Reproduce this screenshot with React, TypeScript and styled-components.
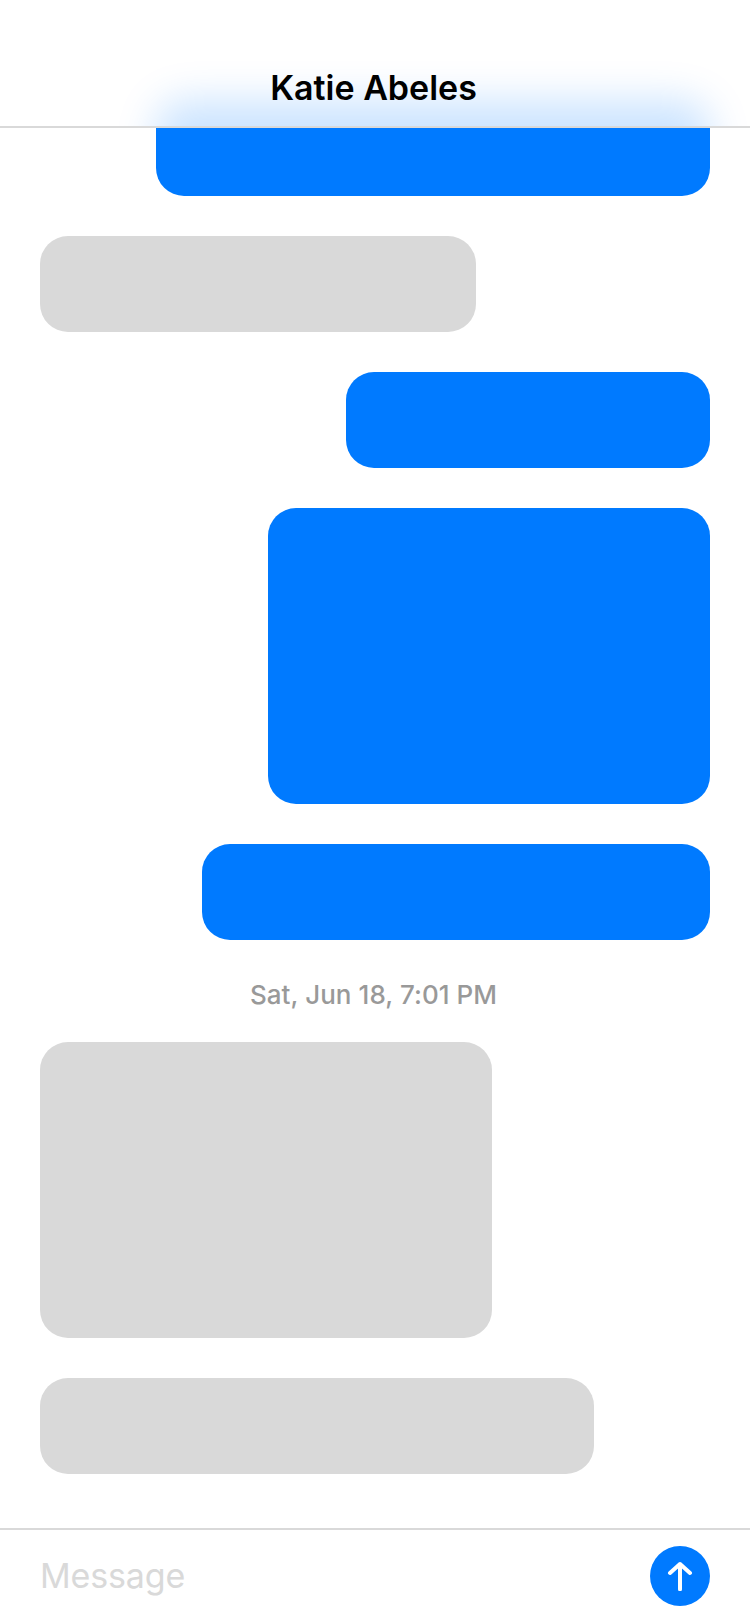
import React from 'react';
import styled, { createGlobalStyle } from 'styled-components';

const GlobalStyle = createGlobalStyle`
  * { box-sizing: border-box; }
  body { margin: 0; background: #fff; font-family: Inter, sans-serif; }
`;

const Screen = styled.div`
  position: relative;
  width: 750px;
  height: 1624px;
  overflow: hidden;
  display: flex;
  flex-direction: column;
  background: #fff;
`;

const Header = styled.header`
  position: absolute;
  top: 0;
  left: 0;
  z-index: 1;
  width: 100%;
  height: 128px;
  padding: 66px 3px 0 0;
  overflow: hidden;
  border-bottom: 2px solid #d9d9d9;
  background: #fff;
  text-align: center;
`;

/* Frosted tint of the bubble scrolling beneath the header */
const Frost = styled.div`
  position: absolute;
  top: 100px;
  right: 40px;
  width: 554px;
  height: 96px;
  border-radius: 28px;
  background: #007aff;
  opacity: 0.2;
  filter: blur(20px);
`;

const Name = styled.h1`
  position: relative;
  margin: 0;
  color: #000;
  font-size: 34px;
  font-weight: 600;
  line-height: 44px;
`;

const Thread = styled.main`
  flex: 1;
  display: flex;
  flex-direction: column;
  gap: 40px;
  padding: 100px 40px 0;
`;

const Bubble = styled.div<{ $sent?: boolean; $w: number; $h?: number }>`
  flex: none;
  align-self: ${(p) => (p.$sent ? 'flex-end' : 'flex-start')};
  width: ${(p) => p.$w}px;
  height: ${(p) => p.$h ?? 96}px;
  border-radius: 28px;
  background: ${(p) => (p.$sent ? '#007aff' : '#d9d9d9')};
`;

const Timestamp = styled.time`
  margin: 0 3px 0 0;
  height: 22px;
  color: #999;
  font-size: 26px;
  font-weight: 500;
  letter-spacing: 0.06px;
  line-height: 30px;
  text-align: center;
`;

const Composer = styled.footer`
  display: flex;
  align-items: center;
  justify-content: space-between;
  height: 96px;
  padding: 0 40px 2px;
  border-top: 2px solid #d9d9d9;
`;

const Placeholder = styled.span`
  color: #d9d9d9;
  font-size: 34px;
  letter-spacing: -0.15px;
  line-height: 44px;
`;

const SendButton = styled.button`
  display: flex;
  align-items: center;
  justify-content: center;
  width: 60px;
  height: 60px;
  padding: 0;
  border: 0;
  border-radius: 50%;
  background: #007aff;
`;

export default function App() {
  return (
    <Screen>
      <GlobalStyle />
      <Header>
        <Frost />
        <Name>Katie Abeles</Name>
      </Header>
      <Thread>
        <Bubble $sent $w={554} />
        <Bubble $w={436} />
        <Bubble $sent $w={364} />
        <Bubble $sent $w={442} $h={296} />
        <Bubble $sent $w={508} />
        <Timestamp>Sat, Jun 18, 7:01 PM</Timestamp>
        <Bubble $w={452} $h={296} />
        <Bubble $w={554} />
      </Thread>
      <Composer>
        <Placeholder>Message</Placeholder>
        <SendButton aria-label="Send">
          <svg width="28" height="30" viewBox="0 0 28 30" fill="none" stroke="#fff" strokeWidth="4" strokeLinecap="round" strokeLinejoin="round">
            <path d="M14 28.2V3M4 12L14 3L24 12" />
          </svg>
        </SendButton>
      </Composer>
    </Screen>
  );
}
